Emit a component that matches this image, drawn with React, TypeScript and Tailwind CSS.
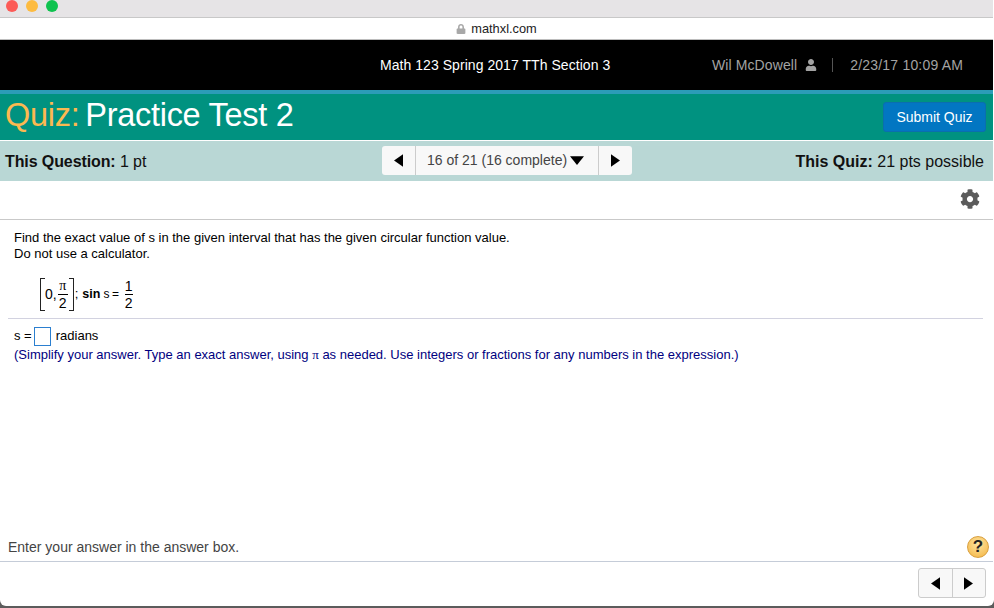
import { FaUser, FaCog, FaLock } from "react-icons/fa";

const Triangle = ({ dir, className }: { dir: "left" | "right" | "down"; className: string }) => {
    const pts = dir === "left" ? "10,0 10,14 0,7" : dir === "right" ? "0,0 0,14 10,7" : "0,0 16,0 8,10";
    return (
        <svg viewBox={dir === "down" ? "0 0 16 10" : "0 0 10 14"} className={className}>
            <polygon points={pts} fill="#000" />
        </svg>
    );
};

const App = () => {
    return (
        <div className="w-[994px] h-[608px] overflow-hidden bg-[#5c5c5c] font-['Liberation_Sans',Arial,sans-serif]">
            <div className="h-[606px] bg-white rounded-b-[6px] overflow-hidden">
                <div className="h-full flex flex-col mr-px">
                    {/* browser chrome */}
                    <div className="h-[18px] shrink-0 bg-[#e6e4e6] border-b border-[#c8c8c8] flex items-start gap-2 pl-[6px]">
                        <span className="w-3 h-3 rounded-full bg-[#fc5b57]" />
                        <span className="w-3 h-3 rounded-full bg-[#fdbb40]" />
                        <span className="w-3 h-3 rounded-full bg-[#0fc24f]" />
                    </div>
                    <div className="h-[22px] shrink-0 bg-white border-b border-[#bdbdbd] flex items-center justify-center gap-[5px] text-[12.8px] text-[#222]">
                        <FaLock className="text-[#a8a8a8] text-[10px]" />
                        <span>mathxl.com</span>
                    </div>
                    {/* course bar */}
                    <div className="h-[50px] shrink-0 bg-black flex items-center text-[14px] tracking-[0.05px]">
                        <div className="w-[380px]" />
                        <span className="text-white w-[332px]">Math 123 Spring 2017 TTh Section 3</span>
                        <span className="text-[#a3a3a3] tracking-[0.1px]">Wil McDowell</span>
                        <FaUser className="text-[#a3a3a3] text-[12px] ml-[8px]" />
                        <span className="w-px h-[14px] bg-[#555] ml-[15px] mr-[17px]" />
                        <span className="text-[#a3a3a3] tracking-[0.2px]">2/23/17 10:09 AM</span>
                    </div>
                    <div className="h-1 shrink-0 bg-[#2b9cb8]" />
                    {/* quiz title */}
                    <div className="h-[46px] shrink-0 bg-[#009280] flex items-center justify-between pl-[5px] pr-[7px]">
                        <div className="text-[32.5px] leading-none tracking-[-0.3px] flex gap-[6px] pb-[4px]">
                            <span className="text-[#fcb950]">Quiz:</span>
                            <span className="text-white">Practice Test 2</span>
                        </div>
                        <button className="w-[103px] h-[30px] rounded-[3px] bg-[#0276c2] border border-[#0a6fae] text-white text-[14px]">
                            Submit Quiz
                        </button>
                    </div>
                    {/* question nav */}
                    <div className="h-[41px] shrink-0 bg-[#b9d7d5] border-t border-white flex items-center justify-between px-[5px] pt-[1px] text-[16px] text-[#111] relative">
                        <div className="tracking-[-0.1px]"><b>This Question:</b> 1 pt</div>
                        <div className="absolute left-[382px] top-[5px] w-[250px] h-[29px] flex bg-[#f8f8f8] rounded-[3px] text-[14px] text-[#444]">
                            <div className="w-[34px] border-r border-[#ccc] flex items-center justify-center">
                                <Triangle dir="left" className="w-[9px] h-[13px]" />
                            </div>
                            <div className="flex-1 border-r border-[#ccc] flex items-center pl-[11px] gap-[3px]">
                                <span>16 of 21 (16 complete)</span>
                                <Triangle dir="down" className="w-[14px] h-[9px]" />
                            </div>
                            <div className="w-[33px] flex items-center justify-center">
                                <Triangle dir="right" className="w-[9px] h-[13px]" />
                            </div>
                        </div>
                        <div className="pr-[4px]"><b>This Quiz:</b> 21 pts possible</div>
                    </div>
                    {/* tools */}
                    <div className="h-[39px] shrink-0 border-b border-[#c9c9c9] flex items-center justify-end pr-[13px] pb-[2px]">
                        <FaCog className="text-[#5b5b5b] text-[20px]" />
                    </div>
                    {/* question */}
                    <div className="flex-1 min-h-0 px-2 text-[13px] text-black">
                        <div className="pl-[6px] pt-[10px] leading-4">
                            <div>Find the exact value of s in the given interval that has the given circular function value.</div>
                            <div>Do not use a calculator.</div>
                        </div>
                        <div className="flex items-center h-[57px] pl-[32px] pt-[8px] border-b border-[#d2d2e0] mr-[2px] text-[13px]">
                            <span className="w-[5px] h-[33px] border-l-[1.5px] border-y-[1.5px] border-[#222]" />
                            <span className="text-[14px]">0,</span>
                            <span className="flex flex-col items-center w-[10px] leading-[16px] ml-[1px] text-[14px]">
                                <span className="font-['Liberation_Serif',serif]">π</span>
                                <span className="w-full border-t border-black" />
                                <span>2</span>
                            </span>
                            <span className="w-[5px] h-[33px] border-r-[1.5px] border-y-[1.5px] border-[#222] ml-[1px]" />
                            <span className="ml-[1px]">;</span>
                            <b className="ml-[4px] text-[12.5px]">sin</b>
                            <span className="ml-[3px] text-[12px] tracking-[-0.4px]">s =</span>
                            <span className="flex flex-col items-center w-[8px] leading-[16px] ml-[6px] text-[14px]">
                                <span>1</span>
                                <span className="w-full border-t border-black" />
                                <span>2</span>
                            </span>
                        </div>
                        <div className="flex items-center pl-[6px] mt-[7px] h-[20px]">
                            <span>s =</span>
                            <span className="w-[17px] h-[19px] border border-[#2b7fd0] ml-[2px] mr-[5px]" />
                            <span>radians</span>
                        </div>
                        <div className="pl-[6px] text-[#000080] leading-[17px]">
                            (Simplify your answer. Type an exact answer, using <span className="font-['Liberation_Serif',serif]">π</span> as needed. Use integers or fractions for any numbers in the expression.)
                        </div>
                    </div>
                    {/* footer hint */}
                    <div className="h-[32px] shrink-0 border-b border-[#c5ccd8] flex items-center justify-between pl-2 pr-[4px] pt-[3px] text-[14px] text-[#444]">
                        <span>Enter your answer in the answer box.</span>
                        <span className="w-[22px] h-[22px] rounded-full bg-[radial-gradient(circle_at_50%_35%,#fde3a0,#f4b440)] border border-[#d9a040] flex items-center justify-center text-[#222] text-[17px] font-bold">?</span>
                    </div>
                    <div className="h-[44px] shrink-0 flex items-start justify-end pr-[7px] pt-[6px]">
                        <div className="w-[68px] h-[30px] flex bg-[#f8f8f8] border border-[#ccc] rounded-[3px]">
                            <div className="flex-1 border-r border-[#ccc] flex items-center justify-center">
                                <Triangle dir="left" className="w-[9px] h-[13px]" />
                            </div>
                            <div className="flex-1 flex items-center justify-center">
                                <Triangle dir="right" className="w-[9px] h-[13px]" />
                            </div>
                        </div>
                    </div>
                </div>
            </div>
        </div>
    );
};

export default App;
